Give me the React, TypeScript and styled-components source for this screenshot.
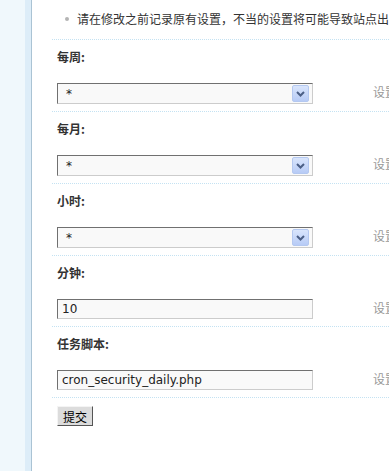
import React from 'react'
import styled, { createGlobalStyle } from 'styled-components'

const GlobalStyle = createGlobalStyle`
   html, body, #root {
      height: 100%;
   }
   body {
      margin: 0;
      background: #fff;
      font-family: 'DejaVu Sans', 'Noto Sans CJK SC', sans-serif;
      font-size: 12px;
      color: #333;
   }
`

type Field = {
   label: string
   value: string
   kind: 'select' | 'text'
   hint: string
}

const fields: Field[] = [
   { label: '每周:', value: '*', kind: 'select', hint: '设置星期几执行本任务，“*”为不限制' },
   { label: '每月:', value: '*', kind: 'select', hint: '设置哪一日执行本任务，“*”为不限制' },
   { label: '小时:', value: '*', kind: 'select', hint: '设置哪一小时执行本任务，“*”为不限制' },
   { label: '分钟:', value: '10', kind: 'text', hint: '设置哪些分钟执行本任务，至多可以设置 12 个分钟值' },
   { label: '任务脚本:', value: 'cron_security_daily.php', kind: 'text', hint: '设置本任务的执行程序文件名' },
]

export default function App() {
   return (
      <>
         <GlobalStyle />
         <Page>
            <Sidebar />
            <Main>
               <Tips>
                  <Tip>请在修改之前记录原有设置，不当的设置将可能导致站点出现异常或者性能问题</Tip>
               </Tips>
               {fields.map(f => (
                  <Row key={f.label}>
                     <Label>{f.label}</Label>
                     <Control>
                        {f.kind === 'select' ? (
                           <SelectBox>
                              <SelectValue>{f.value}</SelectValue>
                              <ArrowButton>
                                 <svg width="9" height="6" viewBox="0 0 9 6">
                                    <path d="M1 1 L4.5 4.5 L8 1" fill="none" stroke="#4b5f86" strokeWidth="2" />
                                 </svg>
                              </ArrowButton>
                           </SelectBox>
                        ) : (
                           <TextInput defaultValue={f.value} />
                        )}
                        <Hint>{f.hint}</Hint>
                     </Control>
                  </Row>
               ))}
               <SubmitButton>提交</SubmitButton>
            </Main>
         </Page>
      </>
   )
}

const Page = styled.div`
   display: flex;
   min-height: 100vh;
   overflow: hidden;
`

const Sidebar = styled.div`
   flex: none;
   width: 25px;
   background: #f0f8fc;
   border-right: 6px solid #ddedf8;
`

const Main = styled.div`
   flex: 1;
   min-width: 0;
   border-left: 1px solid #aac3d4;
   padding-left: 20px;
   overflow: hidden;
`

const Tips = styled.ul`
   margin: 0;
   padding: 11px 0 0 25px;
   height: 28px;
   border-bottom: 1px dotted #c4e2f2;
   list-style: none;
`

const Tip = styled.li`
   position: relative;
   white-space: nowrap;
   line-height: 16px;
   font-family: 'Noto Sans CJK SC', sans-serif;
   color: #333;
   &::before {
      content: '';
      position: absolute;
      left: -12px;
      top: 6px;
      width: 4px;
      height: 4px;
      border-radius: 50%;
      background: #b4b4b4;
   }
`

const Row = styled.div`
   padding: 9px 0 7px 5px;
   border-bottom: 1px dotted #c4e2f2;
`

const Label = styled.div`
   height: 16px;
   line-height: 16px;
   margin-bottom: 18px;
   font-weight: bold;
   font-family: 'Noto Sans CJK SC', sans-serif;
   color: #333;
`

const Control = styled.div`
   display: flex;
   align-items: center;
   white-space: nowrap;
`

const SelectBox = styled.div`
   flex: none;
   box-sizing: border-box;
   width: 256px;
   height: 21px;
   display: flex;
   align-items: center;
   justify-content: space-between;
   padding: 0 3px 0 8px;
   background: #f9f9f9;
   border: 1px solid #cccccc;
   border-top-color: #707070;
   border-left-color: #707070;
`

const SelectValue = styled.span`
   font-family: 'DejaVu Sans', sans-serif;
   font-size: 12px;
   color: #222;
`

const ArrowButton = styled.span`
   box-sizing: border-box;
   width: 17px;
   height: 17px;
   display: flex;
   align-items: center;
   justify-content: center;
   background: linear-gradient(#d9e5fc, #b7cbf6);
   border: 1px solid #b4c8f0;
   border-radius: 2px;
`

const TextInput = styled.input`
   flex: none;
   box-sizing: border-box;
   width: 256px;
   height: 20px;
   margin: 0;
   padding: 0 4px;
   background: #f9f9f9;
   border: 1px solid #cccccc;
   border-top-color: #707070;
   border-left-color: #707070;
   font-family: 'DejaVu Sans', sans-serif;
   font-size: 12px;
   color: #222;
   outline: none;
`

const Hint = styled.span`
   margin: 0 0 3px 60px;
   line-height: 16px;
   font-family: 'Noto Sans CJK SC', sans-serif;
   color: #999;
`

const SubmitButton = styled.button`
   margin: 8px 0 0 5px;
   width: 36px;
   height: 20px;
   padding: 0;
   background: #dcdcdc;
   border: 1px solid;
   border-color: #f4f4f4 #555 #555 #f4f4f4;
   font-family: 'Noto Sans CJK SC', sans-serif;
   font-size: 12px;
   color: #000;
`
